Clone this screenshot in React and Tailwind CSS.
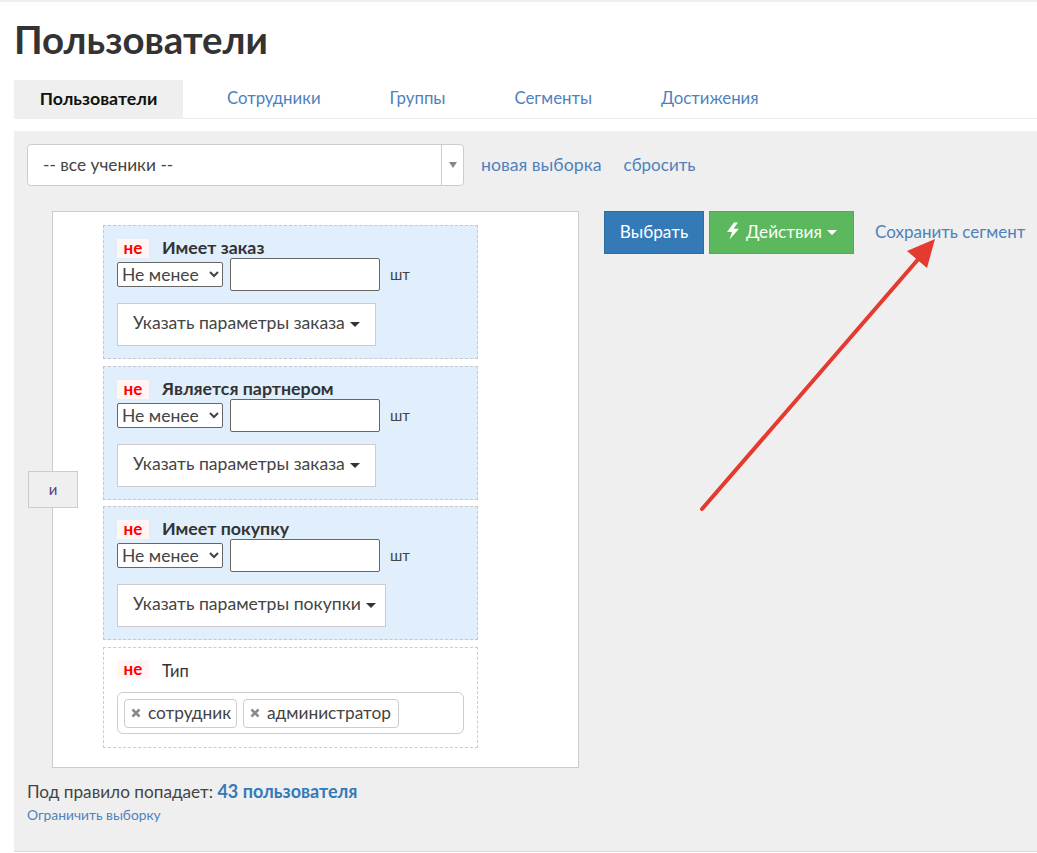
const tabs = ['Сотрудники', 'Группы', 'Сегменты', 'Достижения'];

const tabMargins = ['ml-[44px]', 'ml-[69px]', 'ml-[69px]', 'ml-[69px]'];

const blocks = [
  { title: 'Имеет заказ', button: 'Указать параметры заказа', btnWidth: 'w-[259px]', mt: 'mt-0' },
  { title: 'Является партнером', button: 'Указать параметры заказа', btnWidth: 'w-[259px]', mt: 'mt-[7px]' },
  { title: 'Имеет покупку', button: 'Указать параметры покупки', btnWidth: 'w-[269px]', mt: 'mt-[6px]' },
];

function Caret({ className }) {
  return <span className={`inline-block ml-[5px] align-middle border-x-[5px] border-t-[5px] border-x-transparent ${className}`} />;
}

function NotBadge() {
  return (
    <span className="w-[32px] h-[19px] flex items-center justify-center bg-[#fff5f5] text-[#f00] font-bold text-[17px] leading-none shrink-0 pb-[3px]">не</span>
  );
}

function RuleBlock({ title, button, btnWidth, mt }) {
  return (
    <div className={`${mt} w-[375px] h-[134px] bg-[#e1effd] border border-dashed border-[#c4c8cc] pl-[13px] pt-[13px]`}>
      <div className="flex items-center h-[19px]">
        <NotBadge />
        <span className="ml-[13px] text-[17.8px] leading-[19px] font-bold text-[#333] pb-[2px]">{title}</span>
      </div>
      <div className="flex items-center h-[33px]">
        <select className="w-[106px] h-[25px] bg-white border border-[#666] rounded-[2px] text-[17.5px] leading-[20px] text-[#444]">
          <option>Не менее</option>
        </select>
        <input className="ml-[7px] w-[150px] h-[33px] bg-white border border-[#666] rounded-[2px]" />
        <span className="ml-[10px] text-[15px] text-[#444]">шт</span>
      </div>
      <button className={`mt-[12px] ${btnWidth} h-[43px] bg-white border border-[#ccc] text-[17.6px] text-[#444] text-left pl-[15px] pb-[2px] whitespace-nowrap`}>
        {button}<Caret className="border-t-[#333]" />
      </button>
    </div>
  );
}

function Tag({ label, className }) {
  return (
    <span className={`${className} h-[29px] flex items-center bg-white border border-[#ccc] rounded-[4px] pl-[6px] text-[17.3px] text-[#444]`}>
      <svg width="10" height="10" viewBox="0 0 10 10" className="mr-[7px] shrink-0">
        <path d="M1.5 1.5 L8.5 8.5 M8.5 1.5 L1.5 8.5" stroke="#8a8a8a" strokeWidth="2.6" />
      </svg>
      {label}
    </span>
  );
}

export default function App() {
  return (
    <div className="relative w-[1037px] h-[853px] overflow-hidden bg-white pl-[14px] font-['Lato','Open_Sans',sans-serif] text-[#333]">
      <div className="absolute left-0 top-0 w-full h-[2px] bg-[#eee]" />

      <h1 className="pt-[16px] h-[80px] text-[38.4px] leading-[46px] font-bold text-[#333]">Пользователи</h1>

      <div className="flex h-[39px] border-b border-[#eee] text-[16.8px]">
        <div className="w-[169px] h-[38px] bg-[#efefef] flex items-center justify-center pb-[2px] font-bold text-[17.8px] text-[#111]">Пользователи</div>
        {tabs.map((t, i) => (
          <a key={t} className={`${tabMargins[i]} h-[38px] flex items-center pb-[2px] text-[#4f81bd]`}>{t}</a>
        ))}
      </div>

      <div className="mt-[12px] h-[721px] bg-[#efefef] border-b border-[#ddd] pl-[13px] pt-[13px]">
        <div className="flex items-center h-[42px]">
          <div className="w-[437px] h-[42px] bg-white border border-[#ccc] rounded-[4px] flex">
            <div className="flex-1 pl-[15px] flex items-center text-[17.3px] text-[#444]">-- все ученики --</div>
            <div className="w-[22px] border-l border-[#ccc] flex items-center justify-center">
              <span className="border-x-[4px] border-t-[6px] border-x-transparent border-t-[#888]" />
            </div>
          </div>
          <a className="ml-[17px] text-[17.7px] text-[#4f81bd]">новая выборка</a>
          <a className="ml-[22px] text-[17px] text-[#4f81bd]">сбросить</a>
        </div>

        <div className="flex mt-[25px] items-start">
          <div className="relative w-[527px] h-[557px] ml-[25px] bg-white border border-[#ccc] pl-[50px] pt-[13px]">
            <div className="absolute left-[-25px] top-[259px] w-[50px] h-[37px] bg-[#efefef] border border-[#ccc] flex items-center justify-center text-[15px] text-[#5a3e85]">и</div>
            {blocks.map(b => <RuleBlock key={b.title} {...b} />)}
            <div className="mt-[7px] w-[375px] h-[101px] bg-white border border-dashed border-[#ccc] pl-[13px] pt-[12px]">
              <div className="flex items-center h-[19px]">
                <NotBadge />
                <span className="ml-[13px] text-[16.5px] text-[#333] translate-y-[2px]">Тип</span>
              </div>
              <div className="mt-[13px] w-[347px] h-[42px] border border-[#ccc] rounded-[6px] flex items-center pl-[6px] gap-[6px]">
                <Tag label="сотрудник" className="w-[113px]" />
                <Tag label="администратор" className="w-[156px]" />
              </div>
            </div>
          </div>

          <div className="flex items-center ml-[25px] h-[43px]">
            <button className="w-[100px] h-[43px] bg-[#337ab7] border border-[#2e6da4] text-white text-[17.2px] pb-[1px]">Выбрать</button>
            <button className="ml-[5px] w-[145px] h-[43px] bg-[#5cb85c] border border-[#4cae4c] text-white text-[17.2px] pb-[1px] flex items-center justify-center">
              <svg width="14" height="18" viewBox="0 0 14 18" className="mr-[6px] -translate-y-[1px]">
                <path d="M8 0.5 L1 10 H6 L3.5 17.5 L13 6.8 H7.5 L12 0.5 Z" fill="#fff" />
              </svg>
              Действия<Caret className="border-t-white" />
            </button>
            <a className="ml-[21px] text-[17px] pb-[2px] text-[#4f81bd] whitespace-nowrap">Сохранить сегмент</a>
          </div>
        </div>

        <div className="mt-[13px] text-[17.2px] leading-[20px] text-[#444]">
          Под правило попадает: <a className="font-bold text-[18px] text-[#337ab7]">43 пользователя</a>
        </div>
        <a className="block mt-[4px] text-[13.8px] leading-[18px] text-[#4f81bd]">Ограничить выборку</a>
      </div>

      <svg className="absolute left-0 top-0 pointer-events-none" width="1037" height="853" viewBox="0 0 1037 853">
        <line x1="702" y1="509" x2="921" y2="256" stroke="#e53a2f" strokeWidth="4" strokeLinecap="round" />
        <polygon points="935,239 907,251 927,268" fill="#e53a2f" />
      </svg>
    </div>
  );
}
